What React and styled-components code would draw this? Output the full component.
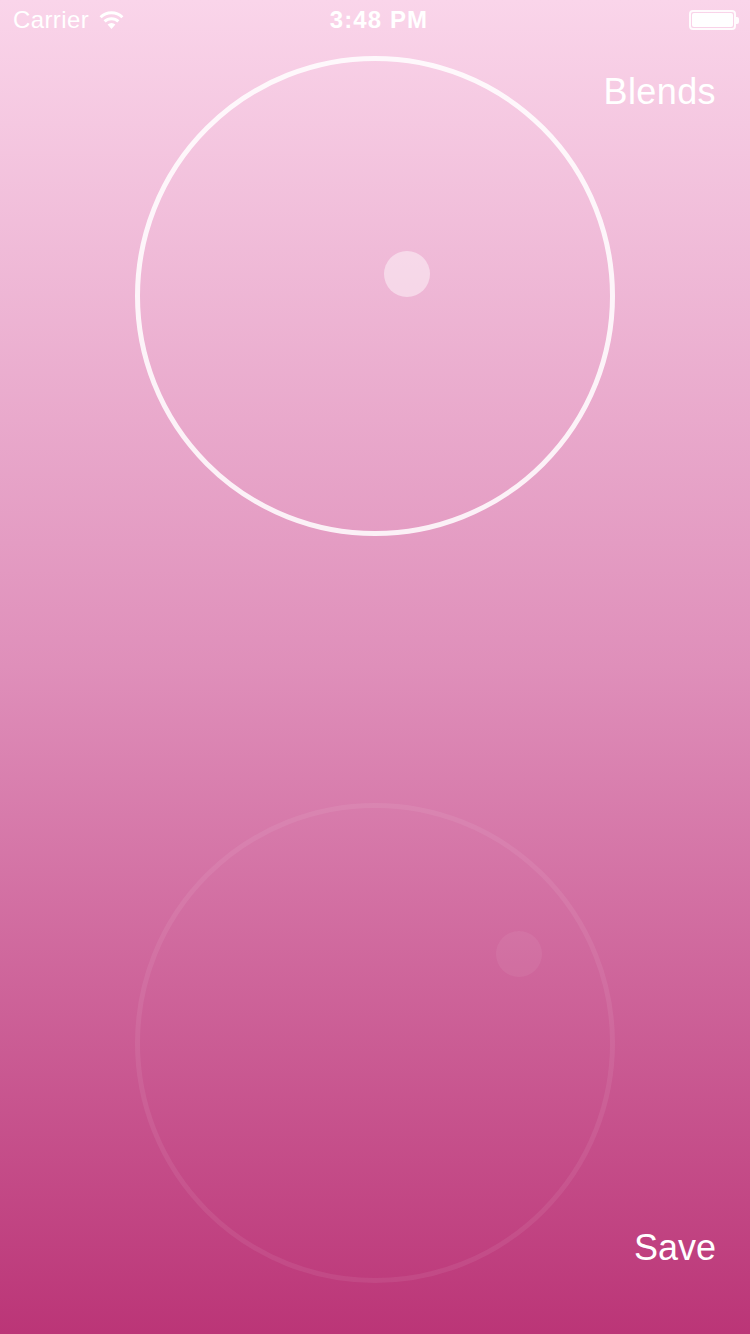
import React from "react";
import styled, { createGlobalStyle } from "styled-components";

const GlobalStyle = createGlobalStyle`
  html, body {
    margin: 0;
    padding: 0;
  }
  body {
    font-family: "Liberation Sans", Arial, sans-serif;
  }
`;

const Screen = styled.div`
  position: relative;
  width: 750px;
  height: 1334px;
  overflow: hidden;
  background: linear-gradient(180deg, #fad5ea 0%, #df8fba 50%, #bb3577 100%);
  display: flex;
  flex-direction: column;
  color: white;
`;

const StatusBar = styled.div`
  height: 40px;
  display: grid;
  grid-template-columns: 1fr auto 1fr;
  align-items: center;
  padding: 0 11px 0 13px;
  font-size: 24px;
`;

const Carrier = styled.div`
  display: flex;
  align-items: center;
  gap: 10px;
  letter-spacing: 0.4px;
`;

const Time = styled.div`
  font-weight: 700;
  letter-spacing: 1.1px;
  padding-left: 6px;
`;

const Battery = styled.div`
  justify-self: end;
  display: flex;
  align-items: center;
`;

const BatteryBody = styled.div`
  width: 41px;
  height: 14px;
  border: 2px solid rgba(255, 255, 255, 0.9);
  border-radius: 4px;
  padding: 1px;
  box-sizing: content-box;
  &::after {
    content: "";
    display: block;
    width: 100%;
    height: 100%;
    background: white;
    border-radius: 2px;
  }
`;

const BatteryTip = styled.div`
  width: 3px;
  height: 7px;
  background: rgba(255, 255, 255, 0.9);
  border-radius: 0 2px 2px 0;
`;

const Stage = styled.div`
  flex: 1;
  display: flex;
  flex-direction: column;
  align-items: center;
  padding-top: 16px;
  gap: 267px;
`;

const Dial = styled.div`
  position: relative;
  width: 480px;
  height: 480px;
  box-sizing: border-box;
  border-radius: 50%;
  border: 5px solid ${({ faint }) => (faint ? "rgba(255,255,255,0.07)" : "rgba(255,255,255,0.85)")};
`;

const Knob = styled.div`
  position: absolute;
  width: 46px;
  height: 46px;
  margin: -23px 0 0 -23px;
  border-radius: 50%;
  background: ${({ faint }) => (faint ? "rgba(255,255,255,0.06)" : "rgba(255,255,255,0.45)")};
`;

const ActionButton = styled.button`
  position: absolute;
  right: 34px;
  background: none;
  border: none;
  padding: 0;
  color: white;
  font-family: "Liberation Sans", Arial, sans-serif;
  font-size: 36px;
  letter-spacing: ${({ tight }) => (tight ? "0px" : "0.4px")};
  cursor: pointer;
`;

const Wifi = () => (
  <svg width="25" height="18" viewBox="0 0 25 18">
    <path d="M12.5 18 L8.6 13.6 A5.8 5.8 0 0 1 16.4 13.6 Z" fill="white" />
    <path d="M5.6 10.4 A10 10 0 0 1 19.4 10.4" stroke="white" strokeWidth="3" fill="none" />
    <path d="M1.6 6.2 A15.6 15.6 0 0 1 23.4 6.2" stroke="white" strokeWidth="3" fill="none" />
  </svg>
);

export default function App() {
  // knob positions inside the dial ring (px)
  const dials = [
    { faint: false, knob: { x: 267, y: 213 } },
    { faint: true, knob: { x: 379, y: 146 } },
  ];

  return (
    <Screen>
      <GlobalStyle />
      <StatusBar>
        <Carrier>
          Carrier
          <Wifi />
        </Carrier>
        <Time>3:48 PM</Time>
        <Battery>
          <BatteryBody />
          <BatteryTip />
        </Battery>
      </StatusBar>
      <Stage>
        {dials.map((d, i) => (
          <Dial key={i} faint={d.faint}>
            <Knob faint={d.faint} style={{ left: d.knob.x, top: d.knob.y }} />
          </Dial>
        ))}
      </Stage>
      <ActionButton style={{ top: 71 }}>Blends</ActionButton>
      <ActionButton tight style={{ top: 1227 }}>Save</ActionButton>
    </Screen>
  );
}
